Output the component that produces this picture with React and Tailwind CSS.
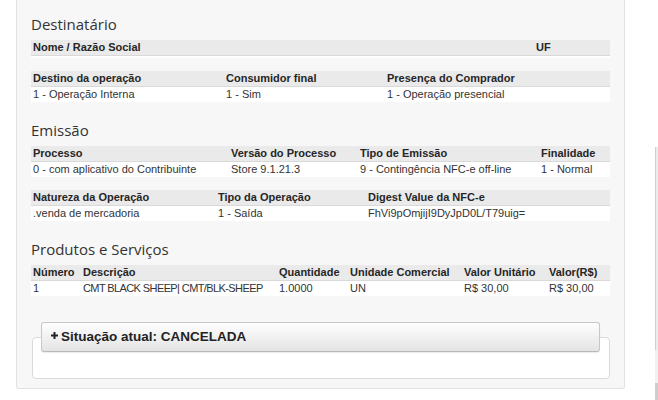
import React from "react";

const sections = [
  {
    title: "Destinatário",
    tables: [
      {
        cols: ["w-[503px]", "flex-1"],
        head: ["Nome / Razão Social", "UF"],
        rows: [],
        empty: true,
      },
      {
        cols: ["w-[193px]", "w-[161px]", "flex-1"],
        head: ["Destino da operação", "Consumidor final", "Presença do Comprador"],
        rows: [["1 - Operação Interna", "1 - Sim", "1 - Operação presencial"]],
      },
    ],
  },
  {
    title: "Emissão",
    tables: [
      {
        cols: ["w-[198px]", "w-[129px]", "w-[181px]", "flex-1"],
        head: ["Processo", "Versão do Processo", "Tipo de Emissão", "Finalidade"],
        rows: [["0 - com aplicativo do Contribuinte", "Store 9.1.21.3", "9 - Contingência NFC-e off-line", "1 - Normal"]],
      },
      {
        cols: ["w-[185px]", "w-[150px]", "flex-1"],
        head: ["Natureza da Operação", "Tipo da Operação", "Digest Value da NFC-e"],
        rows: [[".venda de mercadoria", "1 - Saída", "FhVi9pOmjijI9DyJpD0L/T79uig="]],
      },
    ],
  },
  {
    title: "Produtos e Serviços",
    tables: [
      {
        cols: ["w-[50px]", "w-[196px] tracking-[-0.6px]", "w-[71px]", "w-[114px]", "w-[85px]", "flex-1"],
        head: ["Número", "Descrição", "Quantidade", "Unidade Comercial", "Valor Unitário", "Valor(R$)"],
        rows: [["1", "CMT BLACK SHEEP| CMT/BLK-SHEEP", "1.0000", "UN", "R$ 30,00", "R$ 30,00"]],
      },
    ],
  },
];

function DataTable({ table }) {
  return (
    <div className="w-full text-[11px] leading-[15px] text-[#333]">
      <div className="flex h-[16px] border-b border-[#d9d9d9] bg-[#eaeaea] font-bold tracking-normal text-[#262626]">
        {table.head.map((h, i) => (
          <div key={i} className={`${table.cols[i].split(" ")[0]} whitespace-nowrap pl-[2px]`}>
            {h}
          </div>
        ))}
      </div>
      {table.empty && <div className="h-[2px] bg-white" />}
      {table.rows.map((r, ri) => (
        <div key={ri} className="flex h-[15px] bg-white">
          {r.map((c, i) => (
            <div key={i} className={`${table.cols[i]} whitespace-nowrap pl-[2px]`}>
              {c}
            </div>
          ))}
        </div>
      ))}
    </div>
  );
}

export default function App() {
  return (
    <div className="flex h-[400px] w-[658px] overflow-hidden bg-white font-['Liberation_Sans',Arial,sans-serif]">
      <div className="ml-[16px] flex h-[389px] w-[609px] flex-col rounded-b-[3px] border-x border-b border-[#e2e2e2] bg-[#f7f7f7] px-[14px] pb-[9px] pt-[14px]">
        {sections.map((s, si) => (
          <div key={si} className={si > 0 ? "mt-[18px]" : ""}>
            <h2 className="mb-[6px] font-['Open_Sans',sans-serif] text-[15px] leading-[20px] font-normal text-[#333]">
              {s.title}
            </h2>
            <div className="flex flex-col gap-[13px]">
              {s.tables.map((t, ti) => (
                <DataTable key={ti} table={t} />
              ))}
            </div>
          </div>
        ))}

        <div className="mt-[26px] flex flex-1 flex-col pl-px">
          <div className="relative z-10 mx-[9px] mr-[10px] flex h-[30px] items-center rounded-[3px] border border-[#c8c8c8] border-b-[#b9b9b9] bg-gradient-to-b from-[#fefefe] to-[#e4e4e4] pl-[9px] text-[13.5px] font-bold text-[#222] shadow-[0_1px_1px_rgba(0,0,0,0.08)]">
            <svg width="7" height="7" viewBox="0 0 7 7" className="mb-[4px] mr-[3px]">
              <rect x="2.5" y="0" width="2" height="7" fill="#222" />
              <rect x="0" y="2.5" width="7" height="2" fill="#222" />
            </svg>
            <span>Situação atual: CANCELADA</span>
          </div>
          <div className="-mt-[15px] h-[42px] rounded-[4px] border border-[#dadada] bg-white" />
        </div>
      </div>

      <div className="ml-auto flex w-[3px] flex-col">
        <div className="h-[147px] bg-white" />
        <div className="h-[203px] border-l border-[#cfcfcf] bg-[#ececec]" />
        <div className="h-[33px] bg-[#f1f1f1]" />
        <div className="flex-1 bg-[#cdcdcd]" />
      </div>
    </div>
  );
}
